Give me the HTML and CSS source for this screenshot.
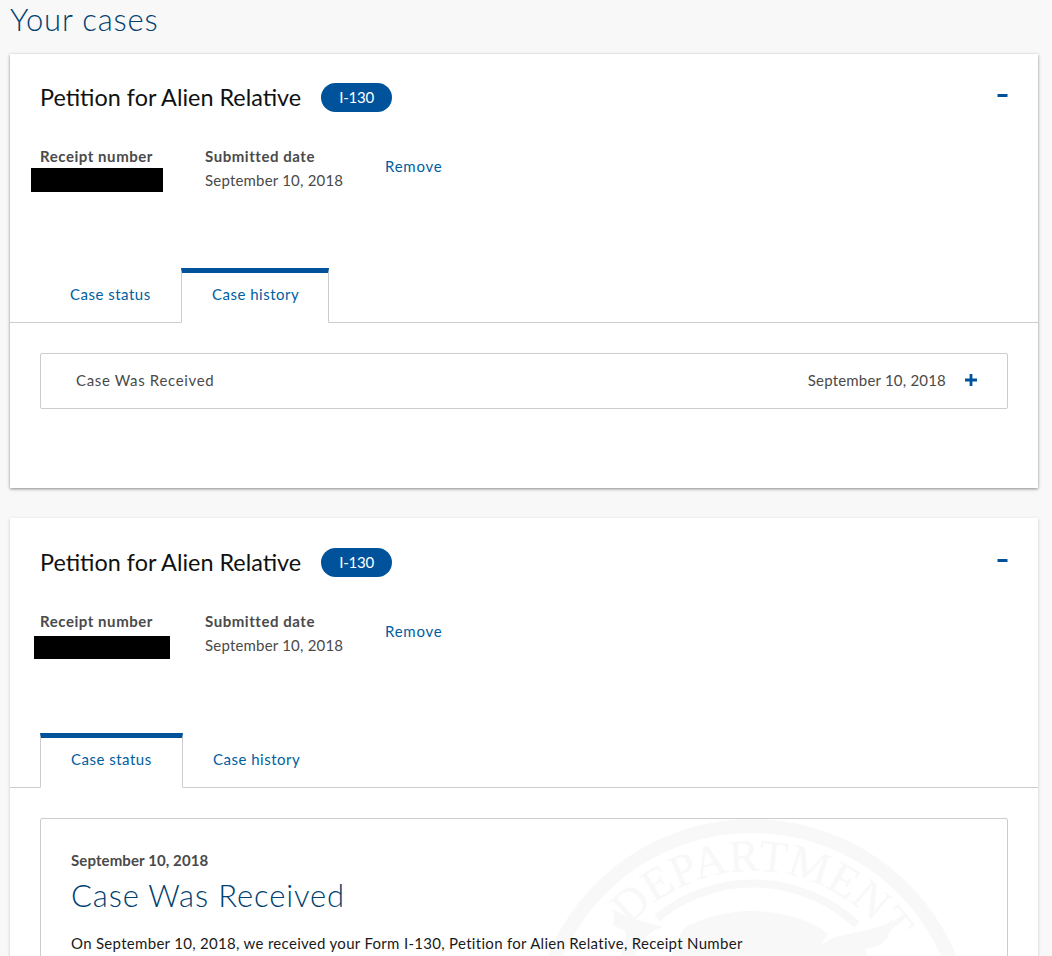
FILE: index.html
```html
<!DOCTYPE html>
<html lang="en">
<head>
<meta charset="utf-8">
<title>Your cases</title>
<link rel="stylesheet" href="styles.css">
</head>
<body>
<h1 class="page-title">Your cases</h1>

<section class="card">
  <header class="card-head">
    <h2 class="card-title">Petition for Alien Relative</h2>
    <span class="badge">I-130</span>
    <svg class="toggle" viewBox="0 0 10 3" aria-hidden="true"><rect width="10" height="3" fill="#00539b"/></svg>
  </header>
  <div class="meta">
    <div class="meta-col receipt">
      <div class="label">Receipt number</div>
      <div class="redact redact-a"></div>
    </div>
    <div class="meta-col submitted">
      <div class="label">Submitted date</div>
      <div class="value">September 10, 2018</div>
    </div>
    <a class="remove">Remove</a>
  </div>
  <nav class="tabs">
    <a class="tab tab-status">Case status</a>
    <a class="tab tab-history active">Case history</a>
  </nav>
  <div class="panel panel-history">
    <div class="history-row">
      <span class="history-name">Case Was Received</span>
      <span class="history-date">September 10, 2018</span>
      <svg class="plus" viewBox="0 0 12 12" aria-hidden="true"><path d="M4.600 0h2.800v4.600H12v2.800H7.400V12H4.600V7.400H0V4.600h4.600z" fill="#00539b"/></svg>
    </div>
  </div>
</section>

<section class="card card-second">
  <header class="card-head">
    <h2 class="card-title">Petition for Alien Relative</h2>
    <span class="badge">I-130</span>
    <svg class="toggle" viewBox="0 0 10 3" aria-hidden="true"><rect width="10" height="3" fill="#00539b"/></svg>
  </header>
  <div class="meta">
    <div class="meta-col receipt">
      <div class="label">Receipt number</div>
      <div class="redact redact-b"></div>
    </div>
    <div class="meta-col submitted">
      <div class="label">Submitted date</div>
      <div class="value">September 10, 2018</div>
    </div>
    <a class="remove">Remove</a>
  </div>
  <nav class="tabs">
    <a class="tab tab-status active">Case status</a>
    <a class="tab tab-history">Case history</a>
  </nav>
  <div class="panel">
    <article class="status-box">
      <svg class="seal" viewBox="0 0 442 442" aria-hidden="true">
        <defs><path id="seal-arc" d="M98 107A167 167 0 0 1 387 195"/></defs>
        <circle cx="221" cy="221" r="214" fill="none" stroke="#f8f8f8" stroke-width="14"/>
        <path d="M126 99A151 151 0 0 1 326 106" fill="none" stroke="#f8f8f8" stroke-width="8"/>
        <text class="seal-text"><textPath href="#seal-arc">DEPARTMENT</textPath></text>
        <path d="M82 89C90 98 112 102 132 108C120 112 112 118 104 137H90C92 125 96 118 94 112C90 110 86 108 82 106C85 100 82 94 82 89Z" fill="#f8f8f8"/>
        <path d="M362 100C350 112 320 112 300 120C292 124 284 130 280 137H336L334 130C344 128 350 126 352 124C356 118 362 110 362 100Z" fill="#f8f8f8"/>
        <path d="M152 110C170 98 200 92 219 92C250 92 280 100 297 115L282 137H140Z" fill="#f8f8f8"/>
      </svg>
      <div class="status-date">September 10, 2018</div>
      <h3 class="status-title">Case Was Received</h3>
      <p class="status-text">On September 10, 2018, we received your Form I-130, Petition for Alien Relative, Receipt Number</p>
    </article>
  </div>
</section>
</body>
</html>
```
FILE: styles.css
```css
* { box-sizing: border-box; }
html, body { height: 100%; overflow: hidden; }
body {
  margin: 0;
  padding: 0 14px 0 10px;
  background: #f8f8f8;
  font-family: "Lato", "Open Sans", sans-serif;
  color: #4a4a4a;
}
.page-title {
  margin: 0;
  height: 54px;
  font-size: 31px;
  line-height: 38px;
  font-weight: 300;
  color: #003f6f;
  letter-spacing: 0.8px;
}
.card {
  background: #fff;
  height: 434px;
  box-shadow: 0 1px 3px rgba(0,0,0,.45);
  padding-top: 29px;
}
.card-second {
  margin-top: 30px;
  height: 600px;
  padding-top: 30px;
  box-shadow: 0 1px 3px rgba(0,0,0,.2);
}
.card-head {
  display: flex;
  align-items: center;
  height: 29px;
  padding: 0 30px;
}
.card-title {
  margin: 0;
  font-size: 23.400px;
  line-height: 29px;
  font-weight: 400;
  color: #111;
}
.badge {
  margin-left: 20px;
  width: 71px;
  height: 29px;
  border-radius: 15px;
  background: #00539b;
  color: #fff;
  text-align: center;
  font-size: 15px;
  line-height: 28px;
  letter-spacing: -0.2px;
}
.toggle {
  margin-left: auto;
  margin-bottom: 4px;
  width: 11px;
  height: 3px;
}
.meta {
  display: flex;
  padding: 33px 30px 0;
  height: 156px;
  font-size: 15px;
}
.meta-col { line-height: 24px; }
.receipt { width: 165px; }
.submitted { width: 180px; }
.label { font-weight: 700; height: 22px; line-height: 22px; color: #4a4a4a; letter-spacing: 0.55px; }
.value { line-height: 24px; padding-top: 1px; letter-spacing: 0.2px; }
.redact { background: #000; }
.redact-a { width: 132px; height: 24px; margin: 1px 0 0 -9px; }
.redact-b { width: 136px; height: 23px; margin: 4px 0 0 -6px; }
.remove {
  margin-top: 11px;
  height: 20px;
  line-height: 20px;
  color: #00609f;
  letter-spacing: 0.75px;
}
.tabs {
  display: flex;
  height: 55px;
  padding-left: 30px;
  border-bottom: 1px solid #ccc;
  font-size: 15px;
}
.tab {
  height: 55px;
  padding: 0 30px;
  line-height: 43px;
  color: #00609f;
  border-top: 5px solid transparent;
  letter-spacing: 0.5px;
  white-space: nowrap;
}
.tab-status { width: 141px; }
.tab-history { width: 148px; }
.card-second .tab-status { width: 143px; }
.tab.active {
  background: #fff;
  border: 1px solid #ccc;
  border-top: 5px solid #00539b;
  border-bottom: 1px solid #fff;
}
.panel { padding: 30px 30px 0; }
.history-row {
  display: flex;
  align-items: center;
  height: 56px;
  padding: 0 30px 2px 35px;
  border: 1px solid #ccc;
  border-radius: 2px;
  font-size: 15px;
}
.history-name { letter-spacing: 0.65px; }
.history-date { margin-left: auto; letter-spacing: 0.2px; }
.plus { width: 12px; height: 12px; margin-left: 19px; }
.status-box {
  position: relative;
  overflow: hidden;
  height: 400px;
  padding: 32px 30px;
  border: 1px solid #ccc;
  border-radius: 2px;
}
.seal {
  position: absolute;
  left: 490px;
  top: 0;
  width: 442px;
  height: 442px;
}
.seal-text {
  font-family: "Liberation Serif", serif;
  font-size: 46px;
  fill: #f8f8f8;
}
.status-date, .status-title, .status-text { position: relative; }
.status-date { font-size: 15px; font-weight: 700; line-height: 18px; letter-spacing: 0.1px; }
.status-title {
  margin: 6px 0 0;
  font-size: 31px;
  line-height: 40px;
  font-weight: 300;
  color: #003f6f;
  letter-spacing: 0.85px;
}
.status-text {
  margin: 16px 0 0;
  width: 720px;
  font-size: 15px;
  line-height: 24px;
  color: #1a1a1a;
  letter-spacing: 0.3px;
}
```
